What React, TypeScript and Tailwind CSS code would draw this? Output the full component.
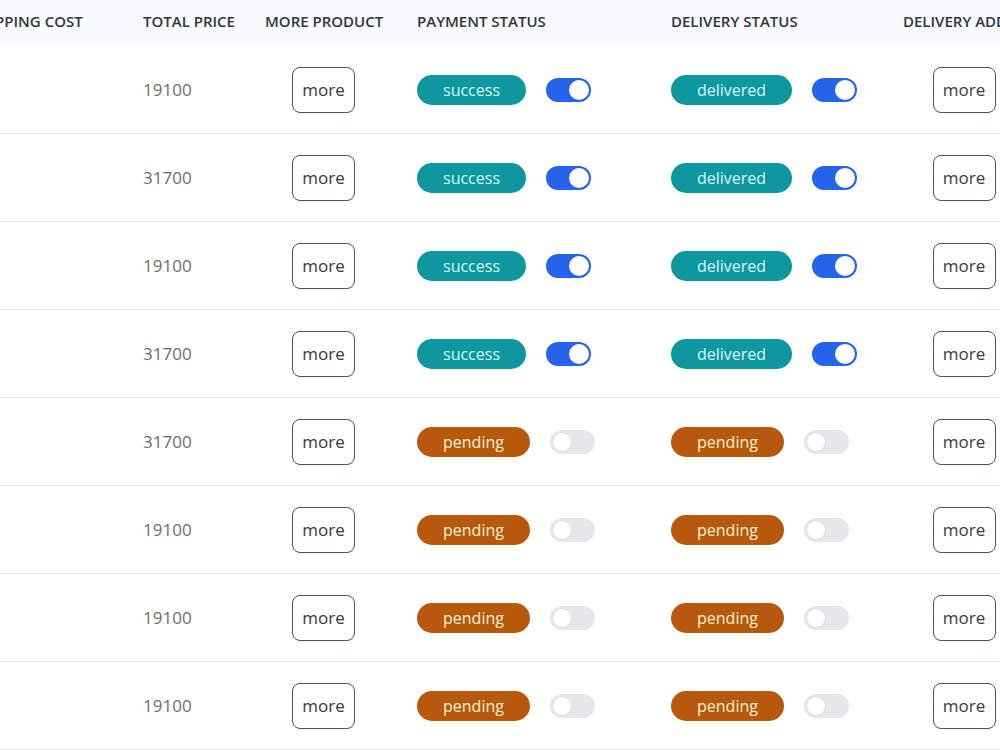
import { useLayoutEffect, useRef } from 'react';

type Order = {
  shipping: string;
  total: string;
  paid: boolean;
  delivered: boolean;
};

const orders: Order[] = [
  { shipping: '100', total: '19100', paid: true, delivered: true },
  { shipping: '100', total: '31700', paid: true, delivered: true },
  { shipping: '100', total: '19100', paid: true, delivered: true },
  { shipping: '100', total: '31700', paid: true, delivered: true },
  { shipping: '100', total: '31700', paid: false, delivered: false },
  { shipping: '100', total: '19100', paid: false, delivered: false },
  { shipping: '100', total: '19100', paid: false, delivered: false },
  { shipping: '100', total: '19100', paid: false, delivered: false },
];

const cols = 'grid grid-cols-[172px_122px_152px_254px_232px_180px]';

function Toggle({ on }: { on: boolean }) {
  return (
    <span
      className={`flex items-center w-[45px] h-[24px] rounded-full p-[2px] ${
        on ? 'bg-[#2563eb] justify-end' : 'bg-[#e5e7eb] justify-start'
      }`}
    >
      <span className={`w-[20px] h-[20px] rounded-full bg-white ${on ? '' : 'border border-[#d9dce1]'}`} />
    </span>
  );
}

function Badge({ text, ok }: { text: string; ok: boolean }) {
  return (
    <span
      className={`inline-flex items-center h-[30px] px-[26px] rounded-full text-base leading-none ${
        ok ? 'bg-[#0e979f] text-[#d5f7f9]' : 'bg-[#b7580c] text-[#fdf0d2]'
      }`}
    >
      {text}
    </span>
  );
}

function MoreButton() {
  return (
    <button className="w-[63px] h-[46px] rounded-lg border border-[#4b5563] bg-white text-[17px] font-medium text-[#333a44]">
      more
    </button>
  );
}

export default function App() {
  const scroller = useRef<HTMLDivElement>(null);

  useLayoutEffect(() => {
    if (scroller.current) scroller.current.scrollLeft = 53;
  }, []);

  return (
    <div
      ref={scroller}
      className="w-[1000px] h-[750px] overflow-x-auto overflow-y-hidden bg-white [scrollbar-width:none]"
      style={{ fontFamily: '"Open Sans", "Noto Sans", sans-serif' }}
    >
      <div className="w-max pl-6">
        {/* header */}
        <div className={`${cols} h-[46px] items-center bg-[#f9fafb] -ml-6 pl-6 pb-[3px] text-[15px] font-semibold uppercase text-[#2f3542]`}>
          <div>Shipping Cost</div>
          <div>Total Price</div>
          <div>More Product</div>
          <div>Payment Status</div>
          <div>Delivery Status</div>
          <div>Delivery Address</div>
        </div>

        {orders.map((o, i) => (
          <div key={i} className={`${cols} h-[88px] items-center border-b border-[#e8e9ec] -ml-6 pl-6`}>
            <div className="text-[17px] text-[#fafafa]">{o.shipping}</div>
            <div className="text-[17px] text-[#6e6e6e]">{o.total}</div>
            <div className="w-[117px] flex justify-center">
              <MoreButton />
            </div>
            <div className="flex items-center gap-5">
              <Badge text={o.paid ? 'success' : 'pending'} ok={o.paid} />
              <Toggle on={o.paid} />
            </div>
            <div className="flex items-center gap-5">
              <Badge text={o.delivered ? 'delivered' : 'pending'} ok={o.delivered} />
              <Toggle on={o.delivered} />
            </div>
            <div className="w-[122px] flex justify-center">
              <MoreButton />
            </div>
          </div>
        ))}
      </div>
    </div>
  );
}
